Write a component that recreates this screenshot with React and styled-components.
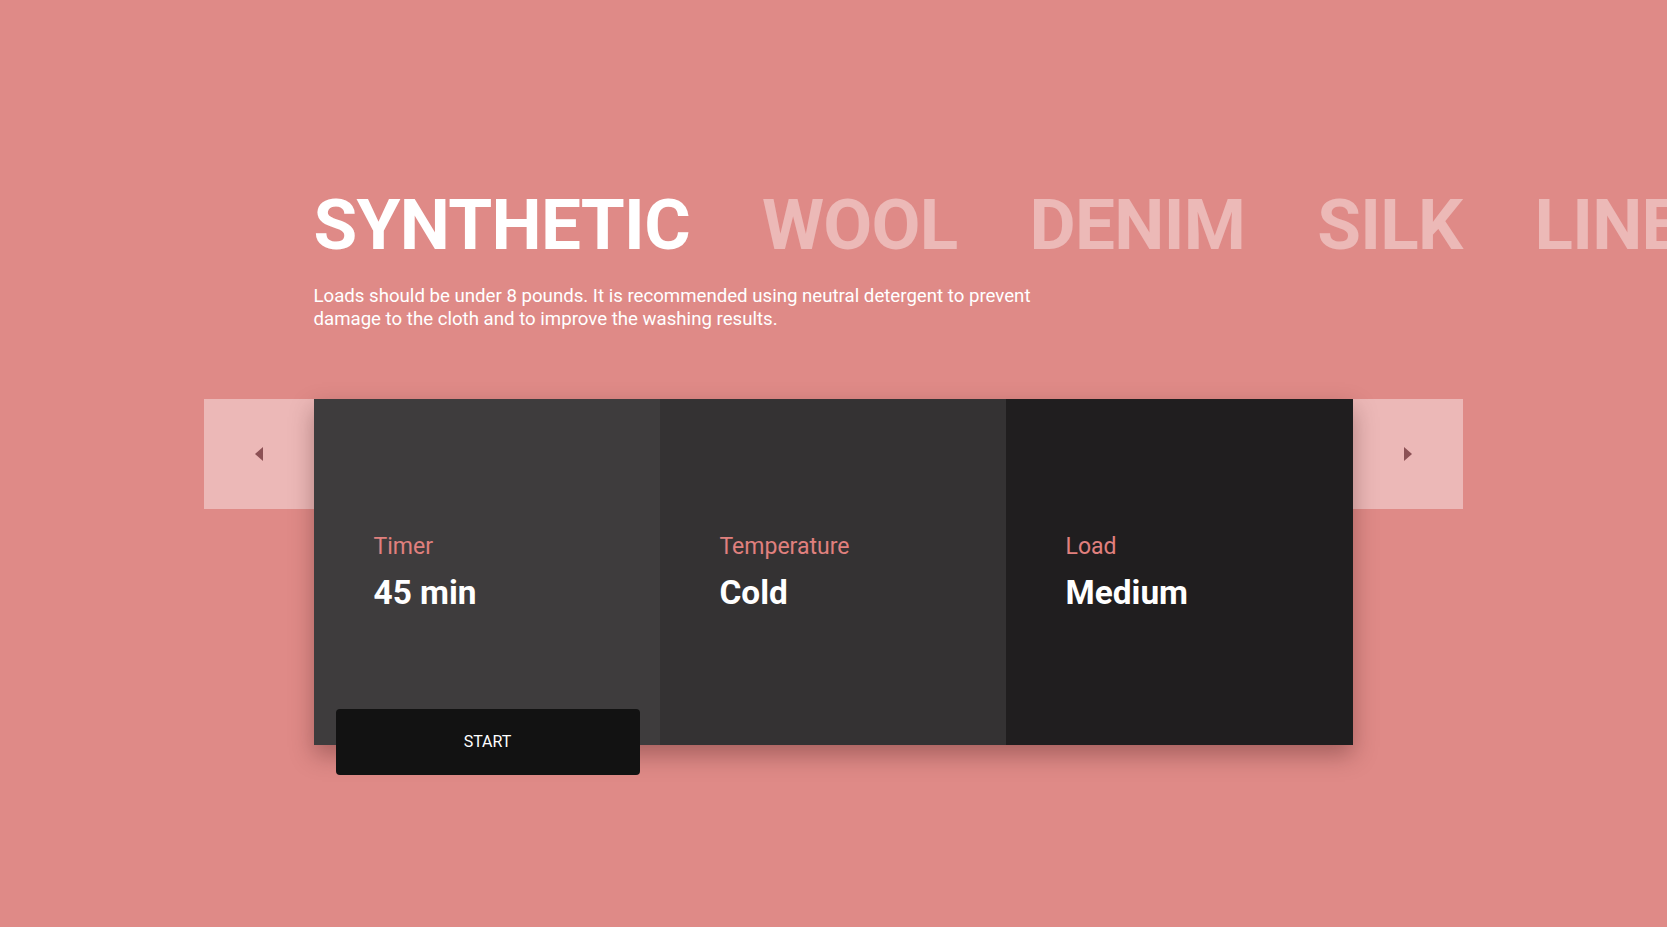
import React from "react";
import styled, { createGlobalStyle } from "styled-components";

const Global = createGlobalStyle`
  html, body {
    margin: 0;
    padding: 0;
    background: #df8a87;
    overflow: hidden;
    font-family: Roboto, "Liberation Sans", Arial, sans-serif;
  }
  * { box-sizing: border-box; }
`;

const Page = styled.div`
  min-height: 100vh;
  width: 100vw;
  padding: 189px 1px 0 0;
`;

const Header = styled.header`
  width: 1039px;
  margin: 0 auto;
`;

const Tabs = styled.nav`
  display: flex;
  gap: 72px;
  white-space: nowrap;
`;

const Tab = styled.div`
  font-size: 71px;
  line-height: 72px;
  font-weight: 700;
  color: ${(p) => (p.$active ? "#ffffff" : "rgba(255,255,255,0.4)")};
  letter-spacing: -0.7px;
  cursor: pointer;
`;

const Description = styled.p`
  margin: 24px 0 0;
  max-width: 730px;
  font-size: 18.65px;
  line-height: 23.4px;
  color: #ffffff;
`;

const Carousel = styled.section`
  display: flex;
  justify-content: center;
  margin-top: 67px;
`;

const NavButton = styled.button`
  width: 110px;
  height: 110px;
  border: 0;
  padding: 0;
  background: #ecb8b7;
  display: flex;
  align-items: center;
  justify-content: center;
  cursor: pointer;
  flex-shrink: 0;
`;

const Arrow = styled.span`
  width: 0;
  height: 0;
  border-top: 7.5px solid transparent;
  border-bottom: 7.5px solid transparent;
  ${(p) =>
    p.$dir === "left"
      ? "border-right: 8px solid #8c5155;"
      : "border-left: 8px solid #8c5155;"}
`;

const Cards = styled.div`
  position: relative;
  z-index: 1;
  display: grid;
  grid-template-columns: 346px 346px 347px;
  height: 346px;
  box-shadow: 0 10px 22px rgba(60, 20, 20, 0.35);
`;

const Card = styled.div`
  background: ${(p) => p.$bg};
  display: flex;
  flex-direction: column;
  justify-content: center;
  padding: 2px 0 0 60px;
`;

const Label = styled.div`
  font-size: 23px;
  line-height: 28px;
  color: #e0807e;
`;

const Value = styled.div`
  margin-top: 12px;
  font-size: 33.4px;
  line-height: 40px;
  font-weight: 700;
  color: #ffffff;
`;

const StartButton = styled.button`
  position: absolute;
  left: 22px;
  top: 310px;
  width: 304px;
  height: 66px;
  border: 0;
  border-radius: 4px;
  background: #121212;
  color: #ffffff;
  font-family: Roboto, "Liberation Sans", Arial, sans-serif;
  font-size: 16px;
  cursor: pointer;
`;

const tabs = ["SYNTHETIC", "WOOL", "DENIM", "SILK", "LINEN", "COTTON"];

const stats = [
  { label: "Timer", value: "45 min", bg: "#3e3c3d" },
  { label: "Temperature", value: "Cold", bg: "#343233" },
  { label: "Load", value: "Medium", bg: "#201e1f" },
];

export default function App() {
  return (
    <Page>
      <Global />
      <Header>
        <Tabs>
          {tabs.map((t, i) => (
            <Tab key={t} $active={i === 0}>
              {t}
            </Tab>
          ))}
        </Tabs>
        <Description>
          Loads should be under 8 pounds. It is recommended using neutral
          detergent to prevent damage to the cloth and to improve the washing
          results.
        </Description>
      </Header>
      <Carousel>
        <NavButton aria-label="previous">
          <Arrow $dir="left" />
        </NavButton>
        <Cards>
          {stats.map((s) => (
            <Card key={s.label} $bg={s.bg}>
              <Label>{s.label}</Label>
              <Value>{s.value}</Value>
            </Card>
          ))}
          <StartButton>START</StartButton>
        </Cards>
        <NavButton aria-label="next">
          <Arrow $dir="right" />
        </NavButton>
      </Carousel>
    </Page>
  );
}
